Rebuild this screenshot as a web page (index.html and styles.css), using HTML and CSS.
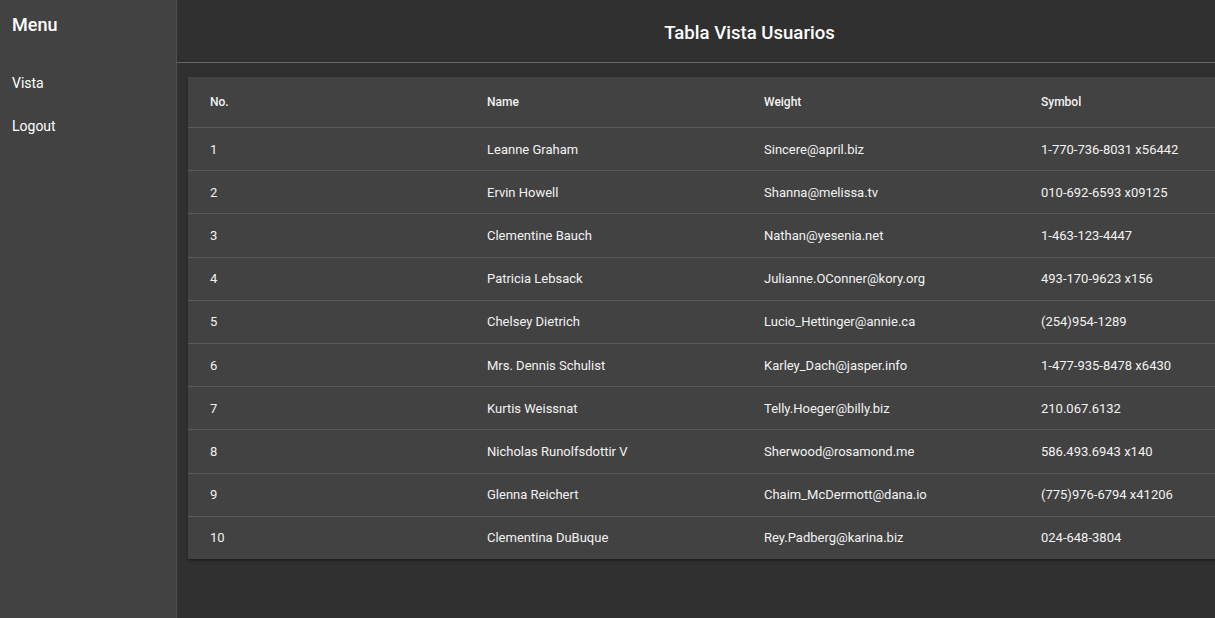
FILE: index.html
```html
<!DOCTYPE html>
<html lang="es">
<head>
<meta charset="utf-8">
<title>Tabla Vista Usuarios</title>
<link rel="stylesheet" href="styles.css">
</head>
<body>
<aside class="sidebar">
  <h2 class="menu-title">Menu</h2>
  <nav class="menu">
    <a class="menu-item" href="#">Vista</a>
    <a class="menu-item" href="#">Logout</a>
  </nav>
</aside>
<main class="main">
  <header class="toolbar">
    <h1 class="toolbar-title">Tabla Vista Usuarios</h1>
  </header>
  <section class="content">
    <table class="users">
      <colgroup>
        <col class="col-a"><col class="col-a"><col class="col-a"><col class="col-b">
      </colgroup>
      <thead>
        <tr><th>No.</th><th>Name</th><th>Weight</th><th>Symbol</th></tr>
      </thead>
      <tbody>
        <tr><td>1</td><td>Leanne Graham</td><td>Sincere@april.biz</td><td>1-770-736-8031 x56442</td></tr>
        <tr><td>2</td><td>Ervin Howell</td><td>Shanna@melissa.tv</td><td>010-692-6593 x09125</td></tr>
        <tr><td>3</td><td>Clementine Bauch</td><td>Nathan@yesenia.net</td><td>1-463-123-4447</td></tr>
        <tr><td>4</td><td>Patricia Lebsack</td><td>Julianne.OConner@kory.org</td><td>493-170-9623 x156</td></tr>
        <tr><td>5</td><td>Chelsey Dietrich</td><td>Lucio_Hettinger@annie.ca</td><td>(254)954-1289</td></tr>
        <tr><td>6</td><td>Mrs. Dennis Schulist</td><td>Karley_Dach@jasper.info</td><td>1-477-935-8478 x6430</td></tr>
        <tr><td>7</td><td>Kurtis Weissnat</td><td>Telly.Hoeger@billy.biz</td><td>210.067.6132</td></tr>
        <tr><td>8</td><td>Nicholas Runolfsdottir V</td><td>Sherwood@rosamond.me</td><td>586.493.6943 x140</td></tr>
        <tr><td>9</td><td>Glenna Reichert</td><td>Chaim_McDermott@dana.io</td><td>(775)976-6794 x41206</td></tr>
        <tr><td>10</td><td>Clementina DuBuque</td><td>Rey.Padberg@karina.biz</td><td>024-648-3804</td></tr>
      </tbody>
    </table>
  </section>
</main>
</body>
</html>
```

FILE: styles.css
```css
html, body {
  margin: 0;
  padding: 0;
  height: 100%;
}
body {
  display: flex;
  overflow: hidden;
  background: #303030;
  color: #ffffff;
  font-family: Roboto, "Liberation Sans", Arial, sans-serif;
}
.sidebar {
  flex: 0 0 auto;
  height: 100vh;
  box-sizing: border-box;
  width: 177px;
  background: #424242;
  border-right: 1px solid #4f4f4f;
  padding: 13px 0 0 12px;
}
.menu-title {
  margin: 0;
  font-size: 18px;
  font-weight: 500;
  line-height: 24px;
}
.menu {
  display: flex;
  flex-direction: column;
  padding-top: 34px;
  gap: 19px;
}
.menu-item {
  color: #ffffff;
  text-decoration: none;
  font-size: 14px;
  line-height: 24px;
}
.main {
  flex: 0 0 1145px;
  min-width: 1145px;
}
.toolbar {
  height: 62px;
  border-bottom: 1px solid #666666;
  display: flex;
  align-items: center;
  justify-content: center;
}
.toolbar-title {
  margin: 0;
  font-size: 18.6px;
  font-weight: 500;
  line-height: 24px;
  padding-top: 3px;
}
.content {
  padding: 14px 11px;
}
.users {
  width: 1123px;
  table-layout: fixed;
  border-collapse: collapse;
  background: #424242;
  box-shadow: 0 3px 1px -2px rgba(0,0,0,.2), 0 2px 2px 0 rgba(0,0,0,.14), 0 1px 5px 0 rgba(0,0,0,.12);
}
.col-a { width: 277px; }
.col-b { width: 292px; }
.users th,
.users td {
  text-align: left;
  padding: 0 0 0 22px;
  border-bottom: 1px solid #595959;
}
.users th {
  height: 50px;
  font-size: 12px;
  font-weight: 500;
  color: #f2f2f2;
}
.users td {
  height: 42.2px;
  font-size: 13px;
  font-weight: 400;
  color: #f2f2f2;
}
.users tbody tr:last-child td {
  border-bottom: none;
}
```
